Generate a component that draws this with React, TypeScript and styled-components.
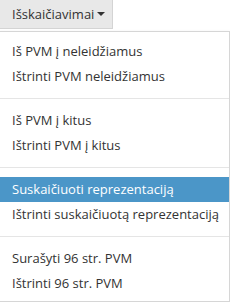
import React from "react";
import styled, { createGlobalStyle } from "styled-components";

const Global = createGlobalStyle`
  html, body { margin: 0; padding: 0; background: #fff; }
  body {
    font-family: "Open Sans", "Liberation Sans", sans-serif;
    font-size: 13px;
    color: #333;
  }
`;

const Wrap = styled.div`
  display: flex;
  flex-direction: column;
  align-items: flex-start;
  margin: -1px 0 0 -1px;
  width: 231px;
`;

const Toggle = styled.button`
  display: flex;
  align-items: center;
  gap: 3px;
  height: 30px;
  padding: 0 7px 0 12px;
  font-family: inherit;
  font-size: 13px;
  color: #333;
  background: #e8e8e8;
  border: 1px solid #d4d4d4;
  border-radius: 0;
  cursor: pointer;
`;

const Caret = styled.span`
  width: 0;
  height: 0;
  border-top: 4px solid #333;
  border-left: 4px solid transparent;
  border-right: 4px solid transparent;
`;

const Menu = styled.ul`
  list-style: none;
  margin: 2px 0 0;
  padding: 7px 0 5px;
  width: 100%;
  box-sizing: border-box;
  background: #fff;
  border: 1px solid #d6d6d6;
  box-shadow: 0 2px 4px rgba(0, 0, 0, 0.15);
`;

const Item = styled.li<{ $active?: boolean }>`
  padding: 3px 12px;
  line-height: 19px;
  white-space: nowrap;
  color: ${(p) => (p.$active ? "#fff" : "#333")};
  background: ${(p) => (p.$active ? "#4b96c8" : "transparent")};
`;

const Divider = styled.li`
  height: 1px;
  margin: 9px 0;
  background: #e5e5e5;
`;

const groups: string[][] = [
  ["Iš PVM į neleidžiamus", "Ištrinti PVM neleidžiamus"],
  ["Iš PVM į kitus", "Ištrinti PVM į kitus"],
  ["Suskaičiuoti reprezentaciją", "Ištrinti suskaičiuotą reprezentaciją"],
  ["Surašyti 96 str. PVM", "Ištrinti 96 str. PVM"],
];

export default function App() {
  return (
    <>
      <Global />
      <Wrap>
        <Toggle>
          Išskaičiavimai
          <Caret />
        </Toggle>
        <Menu>
          {groups.map((g, gi) => (
            <React.Fragment key={gi}>
              {gi > 0 && <Divider />}
              {g.map((t) => (
                <Item key={t} $active={t === "Suskaičiuoti reprezentaciją"}>
                  {t}
                </Item>
              ))}
            </React.Fragment>
          ))}
        </Menu>
      </Wrap>
    </>
  );
}
